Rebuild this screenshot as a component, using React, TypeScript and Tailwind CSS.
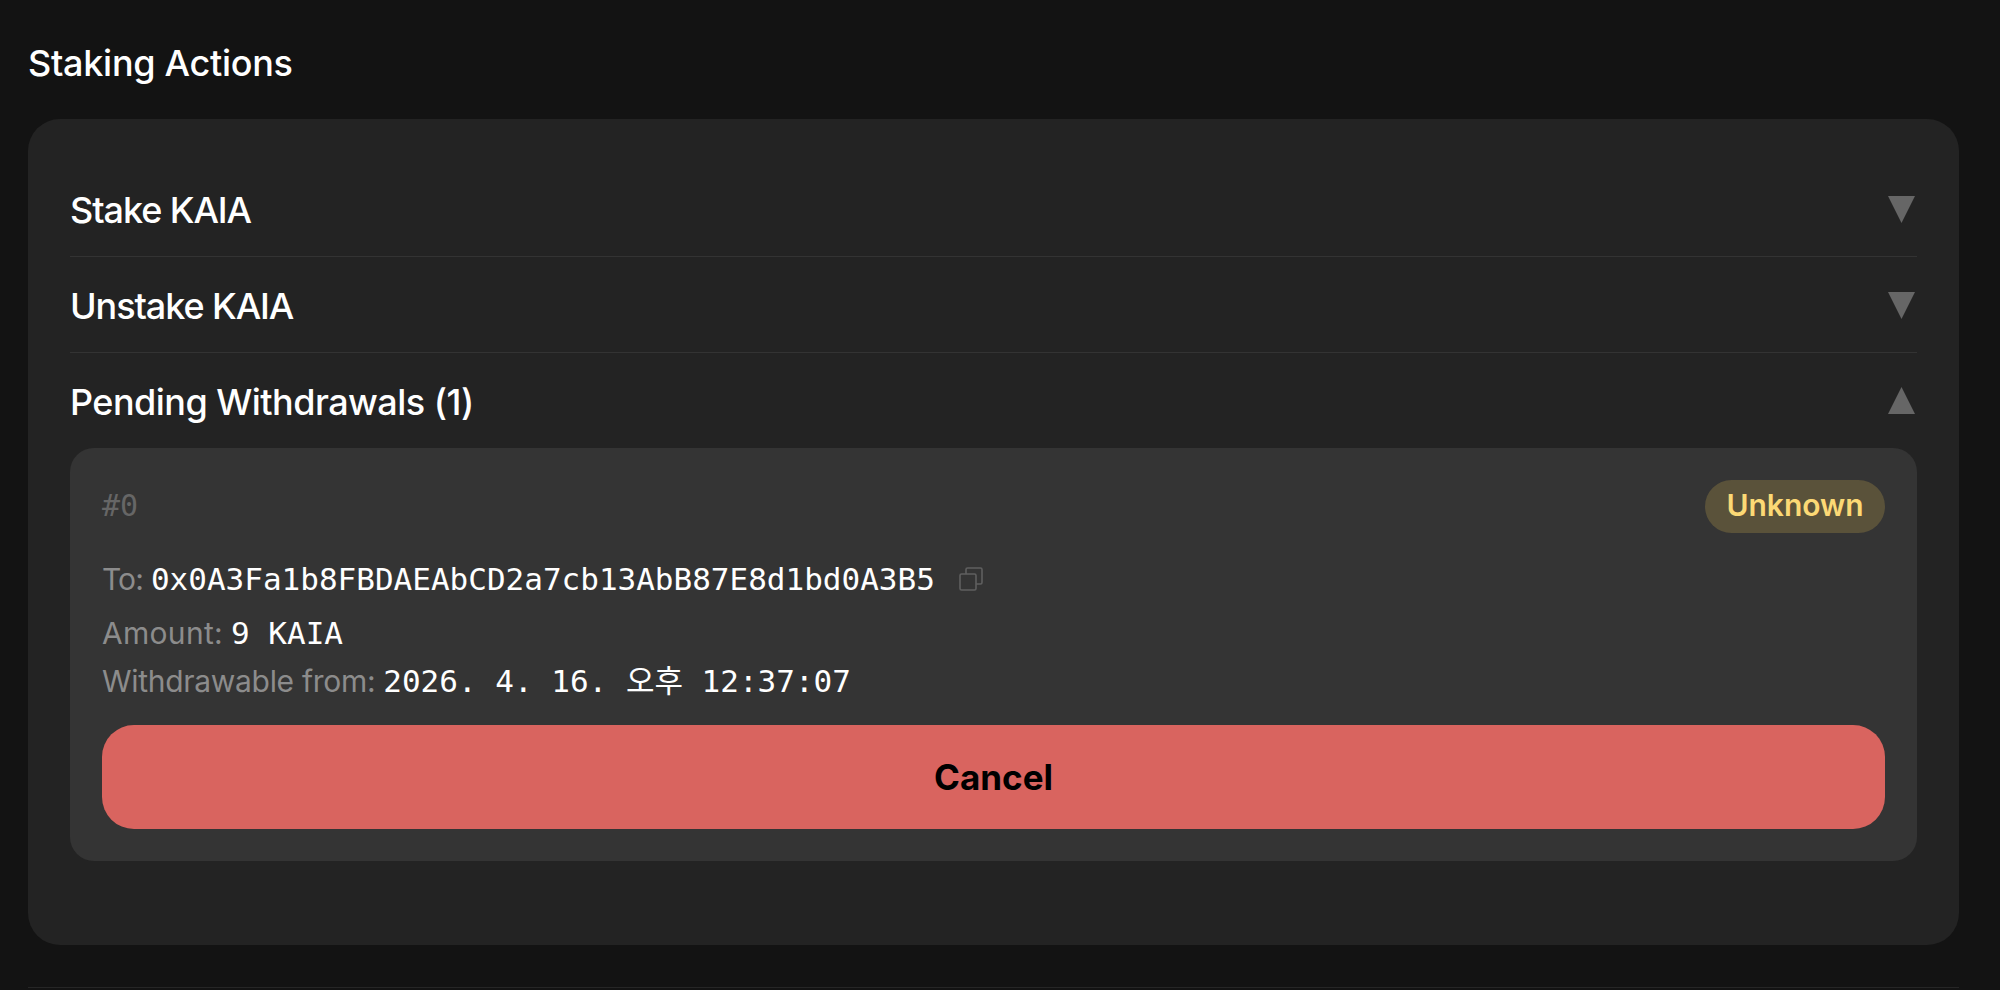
import React from 'react';

const sans = "font-['Inter','Liberation_Sans',sans-serif]";
const mono = "font-['DejaVu_Sans_Mono','Noto_Sans_CJK_KR',monospace]";

const Triangle = ({ up = false }: { up?: boolean }) => (
  <svg width="27" height="27" viewBox="0 0 27 27" className={`shrink-0 mr-[2px] ${up ? '' : 'mt-[2px]'}`}>
    <path d={up ? 'M13.5 0L27 27H0Z' : 'M0 0H27L13.5 27Z'} fill="#666666" />
  </svg>
);

const CopyIcon = () => (
  <svg width="24" height="24" viewBox="0 0 24 24" fill="none" stroke="#5f5f5f" strokeWidth="1.6" className="ml-[24px]">
    <rect x="1" y="7" width="16" height="16" rx="1.5" />
    <path d="M7 7V2.5A1.5 1.5 0 0 1 8.5 1h13A1.5 1.5 0 0 1 23 2.5v13a1.5 1.5 0 0 1-1.5 1.5H17" />
  </svg>
);

const Row = ({ title, open = false }: { title: string; open?: boolean }) => (
  <div className={`flex items-center justify-between ${open ? 'h-[95px]' : 'h-[96px] border-b border-[#333333]'}`}>
    <h3 className={`text-[36px] font-medium text-white mt-[2px] ${open ? 'tracking-[-0.015em]' : 'tracking-[-0.03em]'}`}>{title}</h3>
    <Triangle up={open} />
  </div>
);

const Detail = ({ label, value, labelClass = '', className = '' }: { label: string; value: string; labelClass?: string; className?: string }) => (
  <div className={`flex items-center ${className}`}>
    <span className={`text-[30px] text-[#8c8c8c] mr-[8px] ${labelClass}`}>{label}</span>
    <span className={`${mono} text-[31px] text-white`}>{value}</span>
  </div>
);

export default function App() {
  return (
    <div className={`${sans} h-[990px] overflow-hidden bg-[#131313] pl-[28px] pr-[41px]`}>
      <div className="flex items-center h-[119px] pt-[6px]">
        <h2 className="text-[36px] font-medium text-white tracking-[-0.008em]">Staking Actions</h2>
      </div>

      <section className="bg-[#232323] rounded-[32px] px-[42px] pt-[42px] pb-[84px] h-[826px]">
        <Row title="Stake KAIA" />
        <Row title="Unstake KAIA" />
        <Row title="Pending Withdrawals (1)" open />

        <div className="bg-[#343434] rounded-[24px] p-[32px]">
          <div className="flex items-center justify-between h-[53px]">
            <span className={`${mono} text-[30px] text-[#666666] pb-[2px]`}>#0</span>
            <span className="flex items-center justify-center w-[180px] h-[53px] pb-[2px] rounded-full bg-[#5a523a] text-[#fcd975] text-[30px] font-semibold">
              Unknown
            </span>
          </div>

          <div className="flex items-center mt-[24px] h-[44px]">
            <Detail label="To:" labelClass="tracking-[-0.03em]" value="0x0A3Fa1b8FBDAEAbCD2a7cb13AbB87E8d1bd0A3B5" />
            <CopyIcon />
          </div>
          <Detail label="Amount:" labelClass="tracking-[0.01em]" value="9 KAIA" className="mt-[10px] h-[44px]" />
          <Detail label="Withdrawable from:" labelClass="tracking-[-0.01em]" value="2026. 4. 16. 오후 12:37:07" className="mt-[4px] h-[44px]" />

          <button className="w-full h-[104px] mt-[22px] rounded-[32px] bg-[#d9645f] text-black text-[35px] font-bold">
            Cancel
          </button>
        </div>
      </section>

      <div className="mt-[42px] border-t border-[#262626]" />
    </div>
  );
}
